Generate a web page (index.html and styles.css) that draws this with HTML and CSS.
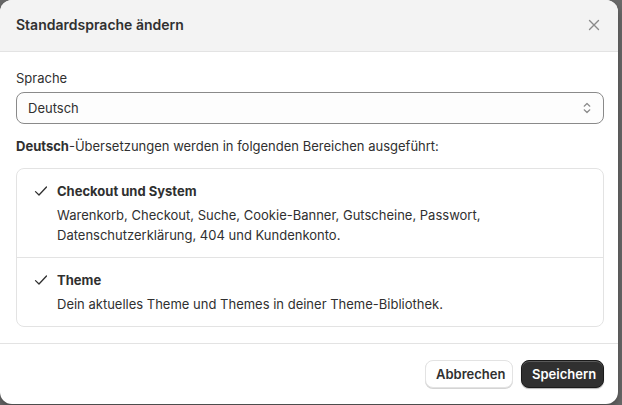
FILE: index.html
```html
<!DOCTYPE html>
<html lang="de">
<head>
<meta charset="utf-8">
<title>Standardsprache ändern</title>
<link rel="stylesheet" href="styles.css">
</head>
<body>
<div class="modal">
  <div class="modal-header">
    <h2 class="modal-title">Standardsprache ändern</h2>
    <button class="close-btn" aria-label="Schließen">
      <svg width="12" height="12" viewBox="0 0 12 12"><path d="M1.5 1.5 L10.5 10.5 M10.5 1.5 L1.5 10.5" stroke="#8a8a8a" stroke-width="1.4" stroke-linecap="round" fill="none"/></svg>
    </button>
  </div>
  <div class="modal-body">
    <label class="field-label">Sprache</label>
    <div class="select">
      <span class="select-value">Deutsch</span>
      <svg class="select-icon" width="10" height="14" viewBox="0 0 10 14"><path d="M2.2 5.2 L5 2.5 L7.8 5.2 M2.2 8.8 L5 11.5 L7.8 8.8" stroke="#8a8a8a" stroke-width="1.2" stroke-linecap="round" stroke-linejoin="round" fill="none"/></svg>
    </div>
    <p class="info"><strong>Deutsch</strong>-Übersetzungen werden in folgenden Bereichen ausgeführt:</p>
    <div class="card">
      <div class="card-row">
        <svg class="check" width="16" height="16" viewBox="0 0 16 16"><path d="M2.5 8.6 L6 12 L13.5 4" stroke="#303030" stroke-width="1.3" stroke-linecap="round" stroke-linejoin="round" fill="none"/></svg>
        <div class="row-text">
          <div class="row-title">Checkout und System</div>
          <div class="row-desc">Warenkorb, Checkout, Suche, Cookie-Banner, Gutscheine, Passwort,<br>Datenschutzerklärung, 404 und Kundenkonto.</div>
        </div>
      </div>
      <div class="card-row">
        <svg class="check" width="16" height="16" viewBox="0 0 16 16"><path d="M2.5 8.6 L6 12 L13.5 4" stroke="#303030" stroke-width="1.3" stroke-linecap="round" stroke-linejoin="round" fill="none"/></svg>
        <div class="row-text">
          <div class="row-title">Theme</div>
          <div class="row-desc">Dein aktuelles Theme und Themes in deiner Theme-Bibliothek.</div>
        </div>
      </div>
    </div>
  </div>
  <div class="modal-footer">
    <button class="btn btn-secondary">Abbrechen</button>
    <button class="btn btn-primary">Speichern</button>
  </div>
</div>
</body>
</html>
```

FILE: styles.css
```css
* { box-sizing: border-box; }
html, body { margin: 0; padding: 0; }
body {
  width: 622px;
  height: 405px;
  overflow: hidden;
  background: #6a6a6a;
  font-family: Inter, "Noto Sans", sans-serif;
  font-size: 13px;
  line-height: 20px;
  color: #303030;
}
.modal {
  width: 618px;
  height: 404px;
  background: #ffffff;
  border-radius: 12px;
  overflow: hidden;
  box-shadow: 0 4px 10px rgba(0,0,0,0.35);
  display: flex;
  flex-direction: column;
}
.modal-header {
  height: 52px;
  background: #f3f3f3;
  border-bottom: 1px solid #e3e3e3;
  display: flex;
  align-items: center;
  justify-content: space-between;
  padding: 0 14px 2px 16px;
}
.modal-title {
  margin: 0;
  font-size: 14px;
  font-weight: 600;
  line-height: 20px;
  color: #303030;
}
.close-btn {
  border: none;
  background: none;
  padding: 0;
  width: 20px;
  height: 20px;
  display: flex;
  align-items: center;
  justify-content: center;
}
.modal-body {
  padding: 16px 14px 16px 16px;
  display: flex;
  flex-direction: column;
  border-bottom: 1px solid #e3e3e3;
}
.field-label {
  display: block;
  line-height: 20px;
}
.select {
  margin-top: 4px;
  height: 32px;
  border: 1px solid #8a8a8a;
  border-radius: 8px;
  background: #fdfdfd;
  display: flex;
  align-items: center;
  justify-content: space-between;
  padding: 0 11px 0 11px;
}
.select-icon { display: block; }
.info {
  margin: 12px 0 0 0;
  line-height: 20px;
}
.info strong { font-weight: 650; }
.card {
  margin-top: 12px;
  border: 1px solid #e3e3e3;
  border-radius: 8px;
}
.card-row {
  display: flex;
  gap: 8px;
  padding: 12px 16px 12px 16px;
}
.card-row + .card-row { border-top: 1px solid #e3e3e3; }
.check { flex: none; margin-top: 2px; }
.row-text {
  display: flex;
  flex-direction: column;
  gap: 4px;
}
.row-title { font-weight: 650; }
.modal-footer {
  flex: 1;
  display: flex;
  justify-content: flex-end;
  align-items: flex-start;
  gap: 8px;
  padding: 16px 14px 0 16px;
}
.btn {
  font-family: inherit;
  font-size: 13px;
  font-weight: 600;
  line-height: 20px;
  height: 28px;
  border-radius: 8px;
  padding: 0 10px;
  cursor: pointer;
}
.btn-secondary {
  background: #ffffff;
  color: #303030;
  border: 1px solid #e3e3e3;
  box-shadow: 0 1px 0 #d4d4d4;
  width: 88px;
}
.btn-primary {
  background: #303030;
  color: #ffffff;
  border: 1px solid #1a1a1a;
  box-shadow: inset 0 1px 0 #5a5a5a, 0 1px 1px rgba(0,0,0,0.3);
  width: 83px;
}
```
